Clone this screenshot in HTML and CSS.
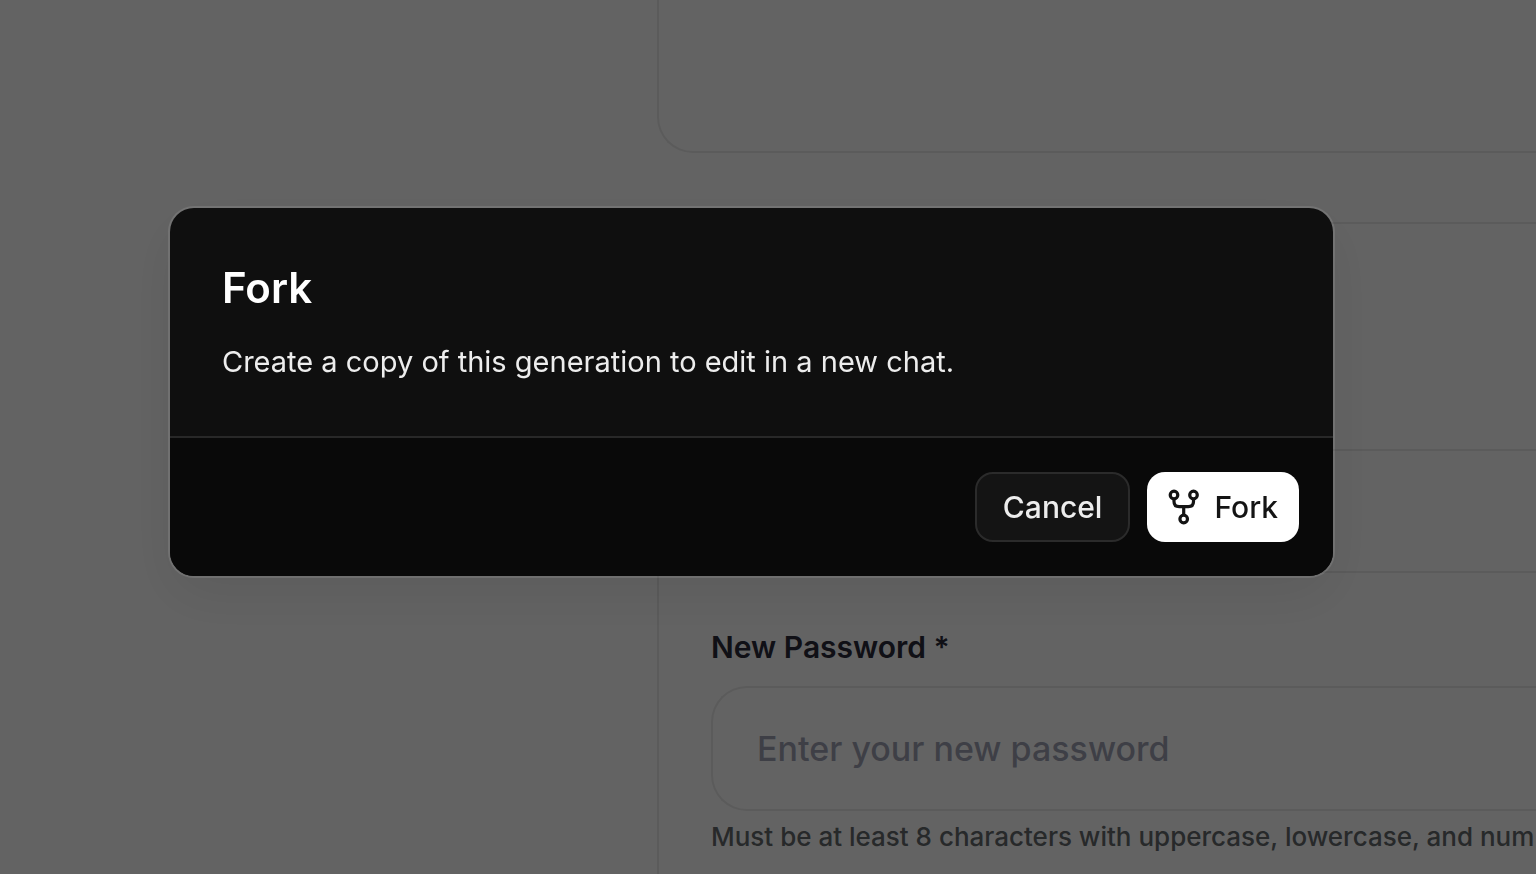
FILE: index.html
```html
<!DOCTYPE html>
<html lang="en">
<head>
<meta charset="utf-8">
<title>Fork</title>
<link rel="stylesheet" href="styles.css">
</head>
<body>
<main class="page">
  <section class="card card-top"></section>
  <section class="card card-form">
    <div class="row row-tall"></div>
    <div class="row row-short"></div>
    <div class="field">
      <label class="label" for="new-password">New Password *</label>
      <input class="input" id="new-password" type="password" placeholder="Enter your new password" aria-describedby="password-hint">
      <p class="hint" id="password-hint">Must be at least 8 characters with uppercase, lowercase, and num</p>
    </div>
  </section>
</main>
<div class="overlay">
  <div class="dialog" role="dialog" aria-modal="true" aria-labelledby="dialog-title" aria-describedby="dialog-text">
    <div class="dialog-body">
      <h2 class="dialog-title" id="dialog-title">Fork</h2>
      <p class="dialog-text" id="dialog-text">Create a copy of this generation to edit in a new chat.</p>
    </div>
    <div class="dialog-footer">
      <button class="button button-cancel" type="button">Cancel</button>
      <button class="button button-fork" type="button">
        <svg class="icon" viewBox="0 0 32 36" fill="none" stroke="currentColor" stroke-width="3.2" aria-hidden="true">
          <circle cx="6" cy="6" r="3.8"/>
          <circle cx="25.5" cy="6" r="3.8"/>
          <circle cx="15.7" cy="30" r="3.8"/>
          <path d="M6 9.8V12.5Q6 17.7 11.2 17.7H20.3Q25.5 17.7 25.5 12.5V9.8M15.7 17.7V26.2"/>
        </svg>
        Fork
      </button>
    </div>
  </div>
</div>
</body>
</html>
```
FILE: styles.css
```css
* {
  box-sizing: border-box;
}

body {
  margin: 0;
  height: 100vh;
  overflow: hidden;
  background: #f8f8f8;
  font-family: Inter, "Liberation Sans", sans-serif;
}

.page {
  display: flex;
  flex-direction: column;
  gap: 69px;
  padding-left: 657px;
}

.card {
  border: 2px solid #e3e3e3;
  border-right: 0;
}

.card-top {
  height: 153px;
  border-top: 0;
  border-bottom-left-radius: 36px;
}

.card-form {
  border-bottom: 0;
  border-top-left-radius: 36px;
}

.row {
  border-bottom: 2px solid #e3e3e3;
}

.row-tall {
  height: 227px;
}

.row-short {
  height: 122px;
}

.field {
  display: flex;
  flex-direction: column;
  padding: 53px 0 40px 52px;
}

.label {
  margin-bottom: 18px;
  color: #282a37;
  font-size: 30px;
  line-height: 42px;
  font-weight: 600;
}

.input {
  width: 100%;
  height: 125px;
  padding: 0 44px;
  border: 2px solid #e3e3e3;
  border-right: 0;
  border-radius: 36px 0 0 36px;
  background: transparent;
  font-family: inherit;
  font-size: 34px;
  font-weight: 500;
}

.input::placeholder {
  color: #9c9fb0;
  opacity: 1;
}

.hint {
  margin: 8px 0 0;
  color: #616669;
  font-size: 26px;
  line-height: 36px;
  font-weight: 500;
  white-space: nowrap;
}

.overlay {
  position: fixed;
  inset: 0;
  padding: 208px 203px 0 170px;
  background: rgba(0, 0, 0, 0.6);
}

.dialog {
  overflow: hidden;
  border-radius: 24px;
  background: #0f0f0f;
  box-shadow: 0 0 0 2px rgba(255, 255, 255, 0.1), 0 20px 56px rgba(0, 0, 0, 0.08);
}

.dialog-body {
  padding: 52px;
}

.dialog-title {
  margin: 0 0 25px;
  color: #ffffff;
  font-size: 42px;
  line-height: 55px;
  font-weight: 600;
}

.dialog-text {
  margin: 0;
  color: #ededed;
  font-size: 29px;
  line-height: 44px;
}

.dialog-footer {
  display: flex;
  justify-content: flex-end;
  gap: 17px;
  padding: 34px;
  border-top: 2px solid #282828;
  background: #090909;
}

.button {
  display: flex;
  align-items: center;
  height: 70px;
  border: 0;
  border-radius: 18px;
  font-family: inherit;
  font-size: 30px;
  line-height: 40px;
  font-weight: 500;
}

.button-cancel {
  padding: 0 26px;
  border: 2px solid #2b2b2b;
  background: #141414;
  color: #ededed;
}

.button-fork {
  gap: 14px;
  padding: 0 21px;
  background: #ffffff;
  color: #141414;
}

.icon {
  width: 32px;
  height: 36px;
}
```
